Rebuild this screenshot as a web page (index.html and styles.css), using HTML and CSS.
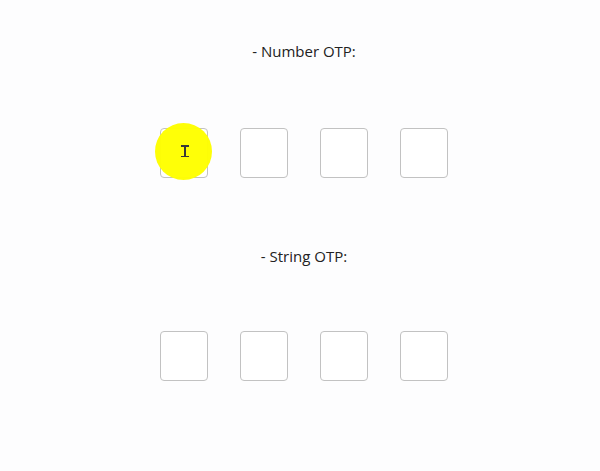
FILE: index.html
```html
<!DOCTYPE html>
<html>
<head>
<meta charset="utf-8">
<link rel="stylesheet" href="styles.css">
</head>
<body>
<div class="page">
  <section class="otp otp-number">
    <p class="label">- Number OTP:</p>
    <div class="boxes">
      <div class="box-wrap">
        <input class="box" type="text" maxlength="1">
        <span class="highlight"><span class="ibeam"></span></span>
      </div>
      <input class="box" type="text" maxlength="1">
      <input class="box" type="text" maxlength="1">
      <input class="box" type="text" maxlength="1">
    </div>
  </section>
  <section class="otp otp-string">
    <p class="label">- String OTP:</p>
    <div class="boxes">
      <input class="box" type="text" maxlength="1">
      <input class="box" type="text" maxlength="1">
      <input class="box" type="text" maxlength="1">
      <input class="box" type="text" maxlength="1">
    </div>
  </section>
</div>
</body>
</html>
```
FILE: styles.css
```css
html, body {
  margin: 0;
  padding: 0;
  background: #fdfdfe;
}
body {
  font-family: "Open Sans", "Noto Sans", sans-serif;
  color: #222;
  width: 600px;
  height: 471px;
  overflow: hidden;
}
.page {
  display: flex;
  flex-direction: column;
  align-items: center;
  padding-top: 41px;
  padding-left: 8px;
}
.otp {
  display: flex;
  flex-direction: column;
  align-items: center;
}
.otp-string {
  margin-top: 68px;
}
.label {
  margin: 0;
  font-size: 15px;
  line-height: 21px;
  height: 21px;
}
.otp-number .boxes { margin-top: 66px; }
.otp-string .boxes { margin-top: 64px; }
.boxes {
  display: flex;
  gap: 32px;
}
.box-wrap {
  position: relative;
  width: 48px;
  height: 50px;
}
.box {
  box-sizing: border-box;
  width: 48px;
  height: 50px;
  margin: 0;
  padding: 0;
  border: 1.5px solid #c2c2c2;
  border-radius: 4px;
  background: #fff;
  outline: none;
  font-size: 20px;
  text-align: center;
}
.highlight {
  position: absolute;
  left: -5px;
  top: -5px;
  width: 57px;
  height: 57px;
  border-radius: 50%;
  background: #ffff00;
  opacity: 0.97;
}
.ibeam {
  position: absolute;
  left: 29px;
  top: 22px;
  width: 1.5px;
  height: 12px;
  background: #333;
}
.ibeam::before, .ibeam::after {
  content: "";
  position: absolute;
  left: -3px;
  width: 7.5px;
  height: 1.5px;
  background: #333;
}
.ibeam::before { top: 0; }
.ibeam::after { bottom: 0; }
```
